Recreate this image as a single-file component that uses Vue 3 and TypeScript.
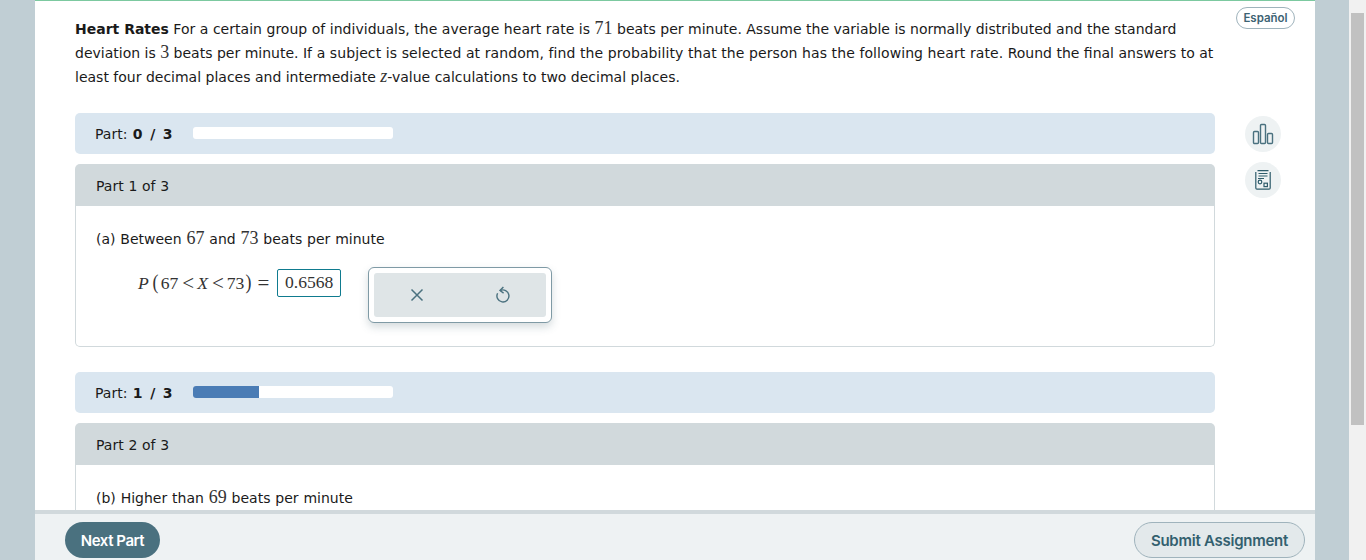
<script setup lang="ts">
interface Seg { done: number; total: number; pct: number; part: number; }
const first: Seg = { done: 0, total: 3, pct: 0, part: 1 };
const second: Seg = { done: 1, total: 3, pct: 33, part: 2 };
</script>

<template>
  <div class="page">
    <div class="viewport">
      <div class="sheet">
        <div class="content">
          <div class="column">
            <p class="question">
              <b>Heart Rates</b> <span class="loose-a">For a certain group of individuals, the average heart rate is</span> <span class="m">71</span> beats per minute. Assume the variable is normally distributed and the standard deviation is <span class="m">3</span> beats per minute. <span class="loose-b">If a subject is selected at random, find the probability that the person has the following heart rate.</span> Round the final answers to at least four decimal places and intermediate <i class="m">z</i>-value calculations to two decimal places.
            </p>

            <div class="progress">
              <span class="plabel">Part: <b>{{ first.done }} / {{ first.total }}</b></span>
              <span class="track"><span class="fill" :style="{ width: first.pct + '%' }"></span></span>
            </div>
            <section class="card">
              <header class="card-head">Part {{ first.part }} of 3</header>
              <div class="card-body">
                <p class="prompt">(a) Between <span class="m">67</span> and <span class="m">73</span> beats per minute</p>
                <div class="answer-row">
                  <span class="formula"><i>P</i><span class="paren">(</span><span>67</span><span class="op">&lt;</span><i>X</i><span class="op">&lt;</span><span>73</span><span class="paren close">)</span><span class="eq">=</span></span>
                  <span class="answer">0.6568</span>
                  <div class="tools">
                    <div class="tools-inner">
                      <svg width="16" height="16" viewBox="0 0 16 16" fill="none" stroke="#4a717f" stroke-width="1.5"><path d="M2.5 2.5l11 11M13.5 2.5l-11 11"/></svg>
                      <svg width="16" height="18" viewBox="0 0 16 18" fill="none" stroke="#4a717f" stroke-width="1.4"><path d="M5.2 4.6a6 6 0 1 1-2.6 2.6"/><path d="M8.4 1L5 4.5l3.6 2.6"/></svg>
                    </div>
                  </div>
                </div>
              </div>
            </section>

            <div class="progress second">
              <span class="plabel">Part: <b>{{ second.done }} / {{ second.total }}</b></span>
              <span class="track"><span class="fill" :style="{ width: second.pct + '%' }"></span></span>
            </div>
            <section class="card">
              <header class="card-head">Part {{ second.part }} of 3</header>
              <div class="card-body">
                <p class="prompt">(b) Higher than <span class="m">69</span> beats per minute</p>
              </div>
            </section>
          </div>

          <aside class="rail">
            <span class="round">
              <svg width="22" height="22" viewBox="0 0 22 22" fill="none" stroke="#4a717f" stroke-width="1.4"><rect x="1.5" y="8.5" width="5" height="12" rx="1"/><rect x="8.5" y="1.5" width="5" height="19" rx="1"/><rect x="15.5" y="10.5" width="5" height="10" rx="1"/></svg>
            </span>
            <span class="round">
              <svg width="16" height="20" viewBox="0 0 16 20" fill="none" stroke="#2f5c6b" stroke-width="1.2"><path d="M2.5.7H13.5M15.2 2v16a1.2 1.2 0 0 1-1.2 1.2H2A1.2 1.2 0 0 1 .8 18V2"/><path d="M3.5 3.5h9M3.5 6h9M3 8.5h6" /><circle cx="5" cy="12" r="1.8"/><rect x="9" y="13.2" width="3.4" height="3.4"/></svg>
            </span>
          </aside>

          <button class="lang">Español</button>
        </div>

        <footer class="footer">
          <button class="next">Next Part</button>
          <button class="submit">Submit Assignment</button>
        </footer>
      </div>
    </div>
    <div class="scrollbar"><div class="thumb"></div></div>
  </div>
</template>

<style>
html, body { margin: 0; height: 100%; overflow: hidden; }
</style>

<style scoped>
.page { display: flex; width: 1366px; height: 560px; overflow: hidden; font-family: "DejaVu Sans", Verdana, sans-serif; color: #1a1a1a; }
.viewport { width: 1349px; height: 560px; box-sizing: border-box; padding: 0 34px 0 35px; background: #c0ced4; }
.sheet { height: 100%; display: flex; flex-direction: column; background: #fff; border-top: 1px solid #7cc9a0; box-sizing: border-box; }
.content { flex: 1; min-height: 0; overflow: hidden; display: flex; position: relative; padding: 0 0 0 40px; }
.column { width: 1140px; flex: none; }
.question { margin: 16px 0 24px; font-size: 14px; line-height: 24px; }
.loose-a { letter-spacing: 0.03px; }
.loose-b { letter-spacing: 0.085px; }
.m { font-family: "Liberation Serif", serif; font-size: 18px; line-height: 1; color: #333; }
.progress { height: 41px; background: #dae6f0; border-radius: 5px; display: flex; align-items: center; padding-left: 20px; font-size: 14px; }
.second { margin-top: 25px; }
.plabel { width: 98px; flex: none; word-spacing: 1px; white-space: nowrap; }
.plabel b { word-spacing: 2.7px; }
.track { display: block; width: 200px; height: 12px; background: #fff; border-radius: 3px; overflow: hidden; margin-top: -1px; }
.fill { display: block; height: 100%; background: #4a7cb5; }
.card { margin-top: 10px; }
.card-head { height: 42px; box-sizing: border-box; background: #d1d9dc; border-radius: 5px 5px 0 0; padding: 1px 0 0 21px; line-height: 42px; font-size: 14px; word-spacing: 0.3px; }
.card-body { border: 1px solid #d1d9dc; border-top: 0; border-radius: 0 0 5px 5px; height: 141px; box-sizing: border-box; padding: 21px 20px 0; font-size: 14px; }
.prompt { margin: 0; line-height: 24px; word-spacing: 0.4px; }
.answer-row { display: flex; align-items: flex-start; margin: 18px 0 0 42px; }
.formula { font-family: "Liberation Serif", serif; font-size: 17.6px; color: #333; line-height: 28px; margin-top: 0; white-space: nowrap; display: flex; align-items: center; }
.formula i { font-style: italic; }
.paren { font-size: 21px; line-height: 20px; margin: -2px 2px 0 3px; font-weight: 400; transform: scaleX(0.85); }
.paren.close { margin: -2px 0 0 1px; }
.op { font-size: 21px; margin: -1px 3px 0 4px; }
.eq { font-size: 21px; margin: -1px 0 0 5px; }
.answer { margin-left: 8px; width: 64px; height: 28px; box-sizing: border-box; border: 1px solid #0f7b8f; border-radius: 2px; font-family: "Liberation Serif", serif; font-size: 17.6px; line-height: 25px; text-align: center; color: #333; }
.tools { margin: -2px 0 0 27px; width: 184px; height: 56px; box-sizing: border-box; background: #fff; border: 1px solid #7f9aa5; border-radius: 6px; padding: 5px; box-shadow: 0 4px 8px rgba(60, 90, 100, 0.22); }
.tools-inner { height: 44px; background: #dfe5e7; border-radius: 3px; display: flex; align-items: center; justify-content: space-around; }
.rail { flex: none; display: flex; flex-direction: column; gap: 10px; margin: 115px 0 0 30px; }
.round { width: 36px; height: 36px; border-radius: 50%; background: #eef2f3; display: flex; align-items: center; justify-content: center; }
.lang { position: absolute; top: 6px; left: 1201px; width: 59px; height: 22px; padding: 0; background: #fff; border: 1px solid #9fb3bc; border-radius: 11px; font-family: Inter, sans-serif; font-weight: 600; font-size: 11.5px; color: #3d6373; }
.footer { height: 50px; flex: none; box-sizing: border-box; background: #eef2f3; border-top: 4px solid #d1d9dc; display: flex; align-items: center; justify-content: space-between; padding: 6px 10px 0 30px; }
.next { width: 95px; height: 36px; border: 0; border-radius: 18px; background: #4a717f; color: #fff; font-family: Inter, sans-serif; font-weight: 600; font-size: 15px; letter-spacing: -0.45px; padding: 0; }
.submit { width: 171px; height: 36px; border: 1px solid #9fb3bc; border-radius: 18px; background: #e3e9eb; color: #33606f; font-family: Inter, sans-serif; font-weight: 600; font-size: 15px; letter-spacing: -0.25px; padding: 0; }
.scrollbar { width: 17px; height: 560px; background: #f1f1f1; padding: 13px 2px 0; box-sizing: border-box; }
.thumb { height: 412px; background: #c1c1c1; }
</style>
